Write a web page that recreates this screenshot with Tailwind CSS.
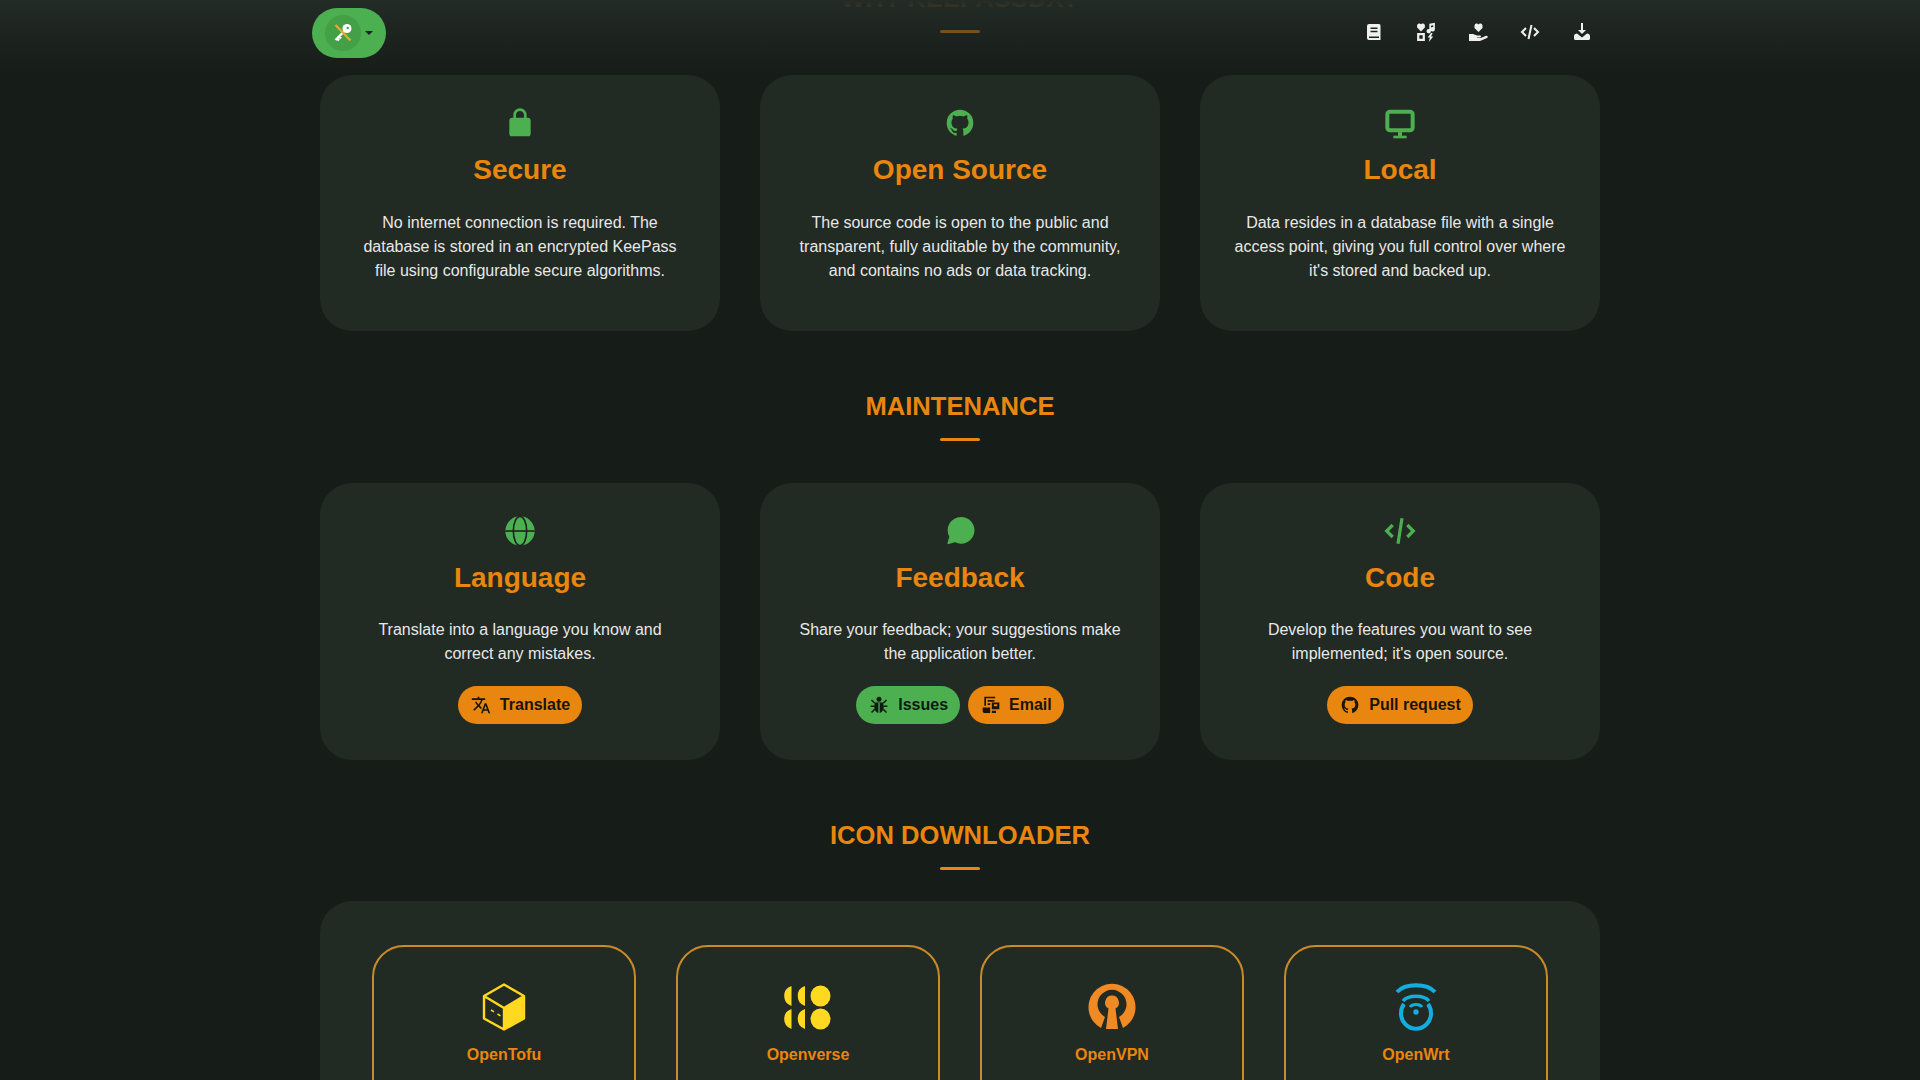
<!DOCTYPE html>
<html lang="en">
<head>
    <meta charset="UTF-8">
    <title>KeePassDX</title>
    <script src="https://cdn.jsdelivr.net/npm/@tailwindcss/browser@4"></script>
</head>
<body class="bg-[#161c18] text-[#e8e8e8] h-screen overflow-hidden relative font-['Liberation_Sans',sans-serif]">

    <!-- top bar floats over the scrolled page -->
    <header class="absolute top-0 left-0 w-full h-[75px] bg-linear-to-b from-[#232b26] to-transparent z-10">
        <div class="w-[1296px] mx-auto flex justify-between items-start">
            <button class="mt-2 w-[74px] h-[50px] rounded-full bg-[#4caf50] flex items-center pl-[13px]">
                <span class="w-9 h-9 rounded-full bg-[#43a047] flex items-center justify-center">
                    <svg class="w-7 h-7" viewBox="0 0 28 28">
                        <circle cx="18" cy="9.500" r="4.500" fill="#fff"/>
                        <circle cx="18.700" cy="9" r="1.200" fill="#43a047"/>
                        <path d="M15 12.500L6.500 21M8 19.500l2 2M10 17.500l2 2" stroke="#fff" stroke-width="2.400" fill="none"/>
                        <path d="M6.500 6l15 15.500" stroke="#eaa92f" stroke-width="2.200"/>
                    </svg>
                </span>
                <span class="ml-[4px] w-0 h-0 border-x-[4px] border-x-transparent border-t-[4px] border-t-[#1a221c]"></span>
            </button>
            <nav class="flex items-center mt-[6px] text-[#f0f0f0]">
                <a class="w-[52px] h-[52px] flex items-center justify-center">
                    <svg class="w-[18px] h-[18px]" viewBox="0 0 18 18" fill="currentColor"><path fill-rule="evenodd" d="M4 1h10a1.500 1.500 0 0 1 1.500 1.500V17H4a2 2 0 0 1-2-2V3a2 2 0 0 1 2-2zM5.500 4.500v1.400h7V4.500zM5.500 7.800v1.400h7V7.800zM4 13.500v1.500h10v-1.500z"/></svg>
                </a>
                <a class="w-[52px] h-[52px] flex items-center justify-center">
                    <svg class="w-5 h-5" viewBox="0 0 18 18" fill="currentColor"><path d="M4.500 8.500L1 5V3a2 2 0 0 1 3.500-1A2 2 0 0 1 8 3v2zM12 1.500l5-.9v6a2 2 0 1 1-1.500-1.900V3l-2 .4v4.800a2 2 0 1 1-1.500-1.900z"/><path fill-rule="evenodd" d="M1 10h7v7H1zM3 12v3h3v-3z"/><path d="M13.500 10l-3 4h2l-1 4 4-5h-2l1.500-3z"/></svg>
                </a>
                <a class="w-[52px] h-[52px] flex items-center justify-center">
                    <svg class="w-5 h-5" viewBox="0 0 20 20" fill="currentColor"><path d="M10.500 10L6.500 6V3.500A2.200 2.200 0 0 1 10.500 2.500 2.200 2.200 0 0 1 14.500 3.500V6z"/><path d="M1 12h4l4 1.500h3a1 1 0 0 1 0 2H9v.6h4l5-2.300a1.200 1.200 0 0 1 1 2.200L12 19H1z"/></svg>
                </a>
                <a class="w-[52px] h-[52px] flex items-center justify-center">
                    <svg class="w-5 h-5" viewBox="0 0 20 20" fill="none" stroke="currentColor" stroke-width="2"><path d="M6 6l-4 4 4 4M14 6l4 4-4 4M11.500 3l-3 14"/></svg>
                </a>
                <a class="w-[52px] h-[52px] flex items-center justify-center">
                    <svg class="w-5 h-5" viewBox="0 0 20 20" fill="currentColor"><path d="M9 1h2v7h3l-4 4-4-4h3z"/><path d="M2 14c0-1.500 1.500-2.500 3-2.500l5 4 5-4c1.500 0 3 1 3 2.500v2.500c0 1-1 1.500-2 1.500H4c-1 0-2-.5-2-1.500z"/></svg>
                </a>
            </nav>
        </div>
    </header>

    <main class="w-[1280px] mx-auto mt-[-17px]">
        <h2 class="h-[30px] leading-[30px] text-center text-[25.6px] font-bold text-[#e8860f]">WHY KEEPASSDX?</h2>
        <div class="w-10 h-[3px] mx-auto mt-[17px] mb-[42px] bg-[#e8860f] rounded-full"></div>

        <section class="grid grid-cols-3 gap-10">
            <div class="bg-[#222a24] rounded-[32px] pt-8 pb-12 px-8 text-center">
                <svg class="w-8 h-8 mx-auto text-[#4caf50]" viewBox="0 0 24 24" fill="currentColor"><path d="M18 8h-1V6c0-2.760-2.240-5-5-5S7 3.240 7 6v2H6c-1.100 0-2 .9-2 2v10c0 1.100.9 2 2 2h12c1.100 0 2-.9 2-2V10c0-1.100-.9-2-2-2zM9 6c0-1.660 1.340-3 3-3s3 1.340 3 3v2H9V6z"/></svg>
                <h3 class="mt-[14px] mb-6 text-[28px] leading-[34px] font-bold text-[#e8860f]">Secure</h3>
                <p class="text-base leading-6">No internet connection is required. The database is stored in an encrypted KeePass file using configurable secure algorithms.</p>
            </div>
            <div class="bg-[#222a24] rounded-[32px] pt-8 pb-12 px-8 text-center">
                <svg class="w-8 h-8 mx-auto text-[#4caf50]" viewBox="0 0 24 24" fill="currentColor"><path d="M12,2A10,10 0 0,0 2,12C2,16.420 4.870,20.170 8.840,21.500C9.340,21.580 9.500,21.270 9.500,21C9.500,20.770 9.500,20.140 9.500,19.310C6.730,19.910 6.140,17.970 6.140,17.970C5.680,16.810 5.030,16.470 5.030,16.470C4.120,15.850 5.100,15.870 5.100,15.870C6.100,15.940 6.630,16.900 6.630,16.900C7.500,18.420 8.970,17.970 9.540,17.730C9.630,17.080 9.890,16.640 10.170,16.390C7.950,16.140 5.620,15.280 5.620,11.500C5.620,10.390 6,9.500 6.650,8.790C6.550,8.540 6.200,7.500 6.750,6.150C6.750,6.150 7.590,5.880 9.500,7.170C10.290,6.950 11.150,6.840 12,6.840C12.850,6.840 13.710,6.950 14.500,7.170C16.410,5.880 17.250,6.150 17.250,6.150C17.800,7.500 17.450,8.540 17.350,8.790C18,9.500 18.380,10.390 18.380,11.500C18.380,15.290 16.040,16.130 13.810,16.380C14.170,16.690 14.500,17.300 14.500,18.220C14.500,19.570 14.500,20.660 14.500,21C14.500,21.270 14.660,21.590 15.170,21.500C19.140,20.160 22,16.420 22,12A10,10 0 0,0 12,2Z"/></svg>
                <h3 class="mt-[14px] mb-6 text-[28px] leading-[34px] font-bold text-[#e8860f]">Open Source</h3>
                <p class="text-base leading-6">The source code is open to the public and transparent, fully auditable by the community, and contains no ads or data tracking.</p>
            </div>
            <div class="bg-[#222a24] rounded-[32px] pt-8 pb-12 px-8 text-center">
                <svg class="w-8 h-8 mx-auto text-[#4caf50]" viewBox="0 0 24 24" fill="none" stroke="currentColor">
                    <rect x="2.500" y="3.500" width="19" height="14" rx="2" stroke-width="3"/>
                    <path d="M12 18v4" stroke-width="3"/>
                    <path d="M7 22.500h10" stroke-width="2"/>
                </svg>
                <h3 class="mt-[14px] mb-6 text-[28px] leading-[34px] font-bold text-[#e8860f]">Local</h3>
                <p class="text-base leading-6">Data resides in a database file with a single access point, giving you full control over where it's stored and backed up.</p>
            </div>
        </section>

        <h2 class="mt-[60px] h-[30px] leading-[30px] text-center text-[25.6px] font-bold text-[#e8860f]">MAINTENANCE</h2>
        <div class="w-10 h-[3px] mx-auto mt-[17px] mb-[42px] bg-[#e8860f] rounded-full"></div>

        <section class="grid grid-cols-3 gap-10">
            <div class="bg-[#222a24] rounded-[32px] pt-8 pb-[36px] px-8 text-center">
                <svg class="w-8 h-8 mx-auto text-[#4caf50]" viewBox="0 0 24 24">
                    <circle cx="12" cy="12" r="11" fill="currentColor"/>
                    <ellipse cx="12" cy="12" rx="5" ry="11" fill="none" stroke="#1b241e" stroke-width="1.200"/>
                    <path d="M1 12h22" stroke="#1b241e" stroke-width="1.200"/>
                </svg>
                <h3 class="mt-[14px] mb-[23px] text-[28px] leading-[34px] font-bold text-[#e8860f]">Language</h3>
                <p class="text-base leading-6">Translate into a language you know and correct any mistakes.</p>
                <div class="mt-[20px] flex justify-center gap-2">
                    <a class="h-[38px] pl-[13px] pr-3 rounded-full bg-[#e8860f] text-[#1a1408] font-bold text-base flex items-center gap-[9px]">
                        <svg class="w-5 h-5" viewBox="0 0 24 24" fill="currentColor"><path d="M12.870 15.070l-2.540-2.510.03-.03c1.740-1.940 2.980-4.170 3.710-6.530H17V4h-7V2H8v2H1v1.990h11.170C11.500 7.920 10.440 9.750 9 11.350 8.070 10.320 7.300 9.190 6.690 8h-2c.73 1.630 1.730 3.170 2.980 4.560l-5.090 5.020L4 19l5-5 3.110 3.110.76-2.040zM18.500 10h-2L12 22h2l1.120-3h4.750L21 22h2l-4.500-12zm-2.620 7l1.620-4.330L19.120 17h-3.240z"/></svg>
                        Translate
                    </a>
                </div>
            </div>
            <div class="bg-[#222a24] rounded-[32px] pt-8 pb-[36px] px-8 text-center">
                <svg class="w-8 h-8 mx-auto text-[#4caf50]" viewBox="0 0 24 24" fill="currentColor"><path d="M12.800 1.500a10 10 0 1 1-4.500 18.900l-4.800 1.400a.7.7 0 0 1-.9-.9l1.400-4.500A10 10 0 0 1 12.800 1.500z"/></svg>
                <h3 class="mt-[14px] mb-[23px] text-[28px] leading-[34px] font-bold text-[#e8860f]">Feedback</h3>
                <p class="text-base leading-6">Share your feedback; your suggestions make the application better.</p>
                <div class="mt-[20px] flex justify-center gap-2">
                    <a class="h-[38px] pl-[13px] pr-3 rounded-full bg-[#4caf50] text-[#0f1a10] font-bold text-base flex items-center gap-[9px]">
                        <svg class="w-5 h-5" viewBox="0 0 24 24" fill="currentColor">
                            <circle cx="12" cy="5" r="3"/>
                            <path d="M7.500 9h9c.8 1.500 1.200 3.500 1.200 5.500 0 3.500-2 6.500-4.900 7V9.500h-1.600v12c-2.900-.5-4.900-3.500-4.900-7 0-2 .4-4 1.200-5.500z"/>
                            <path d="M3 6l4 4M21 6l-4 4M2 13.500h4.500M22 13.500h-4.500M3 21l4-4M21 21l-4-4" stroke="currentColor" stroke-width="1.800" fill="none"/>
                        </svg>
                        Issues
                    </a>
                    <a class="h-[38px] pl-[13px] pr-3 rounded-full bg-[#e8860f] text-[#1a1408] font-bold text-base flex items-center gap-[8px]">
                        <svg class="w-5 h-5" viewBox="0 0 24 24" fill="currentColor"><path d="M4 2h13v2H6v9H4z"/><path d="M8 6h8v2H8zM8 10h3v2H8z"/><path fill-rule="evenodd" d="M13 9h9v8h-9zM15.500 11v2.500h4V11z"/><path d="M2 15h9v6.500H4a2 2 0 0 1-2-2zM13 19h5v2.500h-5z"/></svg>
                        Email
                    </a>
                </div>
            </div>
            <div class="bg-[#222a24] rounded-[32px] pt-8 pb-[36px] px-8 text-center">
                <svg class="w-8 h-8 mx-auto text-[#4caf50]" viewBox="0 0 24 24" fill="none" stroke="currentColor" stroke-width="2.400"><path d="M6.500 7.500L2 12l4.500 4.500M17.500 7.500L22 12l-4.500 4.500M13.500 2.500l-3 19"/></svg>
                <h3 class="mt-[14px] mb-[23px] text-[28px] leading-[34px] font-bold text-[#e8860f]">Code</h3>
                <p class="text-base leading-6">Develop the features you want to see implemented; it's open source.</p>
                <div class="mt-[20px] flex justify-center gap-2">
                    <a class="h-[38px] pl-[13px] pr-3 rounded-full bg-[#e8860f] text-[#1a1408] font-bold text-base flex items-center gap-[9px]">
                        <svg class="w-5 h-5" viewBox="0 0 24 24" fill="currentColor"><path d="M12,2A10,10 0 0,0 2,12C2,16.420 4.870,20.170 8.840,21.500C9.340,21.580 9.500,21.270 9.500,21C9.500,20.770 9.500,20.140 9.500,19.310C6.730,19.910 6.140,17.970 6.140,17.970C5.680,16.810 5.030,16.470 5.030,16.470C4.120,15.850 5.100,15.870 5.100,15.870C6.100,15.940 6.630,16.900 6.630,16.900C7.500,18.420 8.970,17.970 9.540,17.730C9.630,17.080 9.890,16.640 10.170,16.390C7.950,16.140 5.620,15.280 5.620,11.500C5.620,10.390 6,9.500 6.650,8.790C6.550,8.540 6.200,7.500 6.750,6.150C6.750,6.150 7.590,5.880 9.500,7.170C10.290,6.950 11.150,6.840 12,6.840C12.850,6.840 13.710,6.950 14.500,7.170C16.410,5.880 17.250,6.150 17.250,6.150C17.800,7.500 17.450,8.540 17.350,8.790C18,9.500 18.380,10.390 18.380,11.500C18.380,15.290 16.040,16.130 13.810,16.380C14.170,16.690 14.500,17.300 14.500,18.220C14.500,19.570 14.500,20.660 14.500,21C14.500,21.270 14.660,21.590 15.170,21.500C19.140,20.160 22,16.420 22,12A10,10 0 0,0 12,2Z"/></svg>
                        Pull request
                    </a>
                </div>
            </div>
        </section>

        <h2 class="mt-[60px] h-[30px] leading-[30px] text-center text-[25.6px] font-bold text-[#e8860f]">ICON DOWNLOADER</h2>
        <div class="w-10 h-[3px] mx-auto mt-[17px] mb-[31px] bg-[#e8860f] rounded-full"></div>

        <section class="bg-[#222a24] rounded-[32px] px-[52px] pt-11 pb-11 grid grid-cols-4 gap-10">
            <div class="h-[190px] border-2 border-[#c98a2a] rounded-[32px] pt-[36px] text-center">
                <svg class="w-12 h-12 mx-auto" viewBox="0 0 48 48">
                    <path d="M24 25.500L44 13.500V35L24 46.500z" fill="#ffd91f"/>
                    <path d="M24 1.500L44 13v22.500L24 46.500 4 35.500V13zM4 13l20 12 20-12M24 25v21" fill="none" stroke="#ffd91f" stroke-width="2.400" stroke-linejoin="round"/>
                    <path d="M11 27l3 1.800M17.500 31l3 1.800" stroke="#ffd91f" stroke-width="1.500"/>
                </svg>
                <p class="mt-[12px] text-base leading-6 font-bold text-[#e8860f]">OpenTofu</p>
            </div>
            <div class="h-[190px] border-2 border-[#c98a2a] rounded-[32px] pt-[36px] text-center">
                <svg class="w-12 h-12 mx-auto" viewBox="0 0 48 48" fill="#ffd91f">
                    <path d="M7.500 3A10.500 10.500 0 0 0 7.500 23z"/>
                    <path d="M21 3A10.500 10.500 0 0 0 21 23z"/>
                    <ellipse cx="36.500" cy="13" rx="10" ry="10.500"/>
                    <path d="M7.500 26A10.500 10.500 0 0 0 7.500 46z"/>
                    <path d="M21 26A10.500 10.500 0 0 0 21 46z"/>
                    <ellipse cx="36.500" cy="36" rx="10" ry="10.500"/>
                </svg>
                <p class="mt-[12px] text-base leading-6 font-bold text-[#e8860f]">Openverse</p>
            </div>
            <div class="h-[190px] border-2 border-[#c98a2a] rounded-[32px] pt-[36px] text-center">
                <svg class="w-12 h-12 mx-auto" viewBox="0 0 48 48" fill="#f08a24">
                    <path d="M13 45A23.500 23.500 0 1 1 35 45L31 34A14.500 14.500 0 1 0 17 34z"/>
                    <path d="M24 12.500a7 7 0 0 1 3.500 13L30 46H18l2.500-20.500a7 7 0 0 1 3.500-13z"/>
                </svg>
                <p class="mt-[12px] text-base leading-6 font-bold text-[#e8860f]">OpenVPN</p>
            </div>
            <div class="h-[190px] border-2 border-[#c98a2a] rounded-[32px] pt-[36px] text-center">
                <svg class="w-12 h-12 mx-auto" viewBox="0 0 48 48" fill="none" stroke="#12aee0">
                    <path d="M5 9C13 0 35 0 43 9" stroke-width="4"/>
                    <path d="M11 18C16 11.500 32 11.500 37 18" stroke-width="3.500"/>
                    <path d="M12 21A15 15.500 0 1 0 36 21" stroke-width="4"/>
                    <path d="M18 24C20.500 20.500 27.500 20.500 30 24" stroke-width="3"/>
                    <circle cx="24" cy="29" r="2.700" fill="#12aee0" stroke="none"/>
                </svg>
                <p class="mt-[12px] text-base leading-6 font-bold text-[#e8860f]">OpenWrt</p>
            </div>
        </section>
    </main>
</body>
</html>
